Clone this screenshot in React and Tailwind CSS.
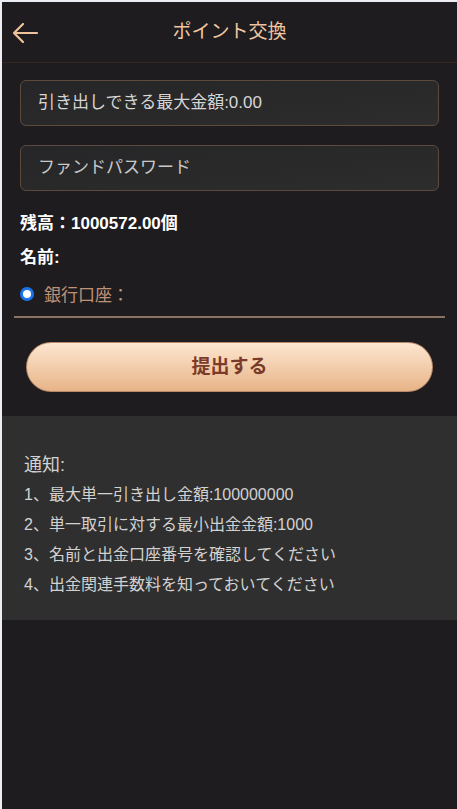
import React from "react";

export default function App() {
  const font = { fontFamily: '"Liberation Sans", "Noto Sans CJK JP", sans-serif' };
  return (
    <div className="min-h-screen bg-[#eceef3] pl-[2px] pt-[2px]" style={font}>
      <div className="min-h-[807px] bg-[#1e1c1f]">
        <div className="relative flex h-[61px] items-center justify-center border-b border-[#33271f]">
          <svg className="absolute left-[10px] top-[21px]" width="26" height="20" viewBox="0 0 26 20" fill="none">
            <path d="M25 10H2M11 1L2 10l9 9" stroke="#eec29c" strokeWidth="2.2" strokeLinecap="round" strokeLinejoin="round" />
          </svg>
          <span className="text-[19px] text-[#f0c6a0]">ポイント交換</span>
        </div>

        <div className="px-[18px] pt-[17px]">
          <div className="flex h-[46px] items-center rounded-[6px] border border-[#5b4b3e] bg-gradient-to-br from-[#262527] to-[#2d2d2d] px-[17px] text-[17px] text-[#d6d6d6]">
            引き出しできる最大金額:0.00
          </div>
          <div className="mt-[19px] flex h-[46px] items-center rounded-[6px] border border-[#5b4b3e] bg-gradient-to-br from-[#262527] to-[#2d2d2d] px-[17px] text-[17px] text-[#c8c8c8]">
            ファンドパスワード
          </div>
          <div className="mt-[21px] text-[17px] font-bold leading-[24px] text-white">残高：1000572.00個</div>
          <div className="mt-[10px] text-[17px] font-bold leading-[24px] text-white">名前:</div>
          <div className="mt-[14px] flex items-center">
            <span className="-mt-[5px] flex h-[14px] w-[14px] items-center justify-center rounded-full bg-[#1a73e8]">
              <span className="h-[8px] w-[8px] rounded-full bg-white" />
            </span>
            <span className="ml-[10px] text-[17px] leading-[24px] text-[#c1927a]">銀行口座：</span>
          </div>
        </div>
        <div className="mx-[12px] mt-[8px] h-[2px] bg-[#8a7263]" />

        <div className="px-[24px] pt-[24px] pb-[24px]">
          <button className="flex h-[50px] w-full items-center justify-center rounded-full border border-[#b98a6a] bg-gradient-to-b from-[#fde6d0] to-[#e7b488] text-[19px] font-bold text-[#7a3b2a]">
            提出する
          </button>
        </div>

        <div className="bg-[#2f2f2f] px-[22px] pt-[36px] pb-[20px] text-[#d2d2d2]">
          <div className="text-[18px] leading-[26px]">通知:</div>
          <div className="mt-[2px] text-[16px] leading-[30px]">
            <div>1、最大単一引き出し金額:100000000</div>
            <div>2、単一取引に対する最小出金金額:1000</div>
            <div>3、名前と出金口座番号を確認してください</div>
            <div>4、出金関連手数料を知っておいてください</div>
          </div>
        </div>
      </div>
    </div>
  );
}
